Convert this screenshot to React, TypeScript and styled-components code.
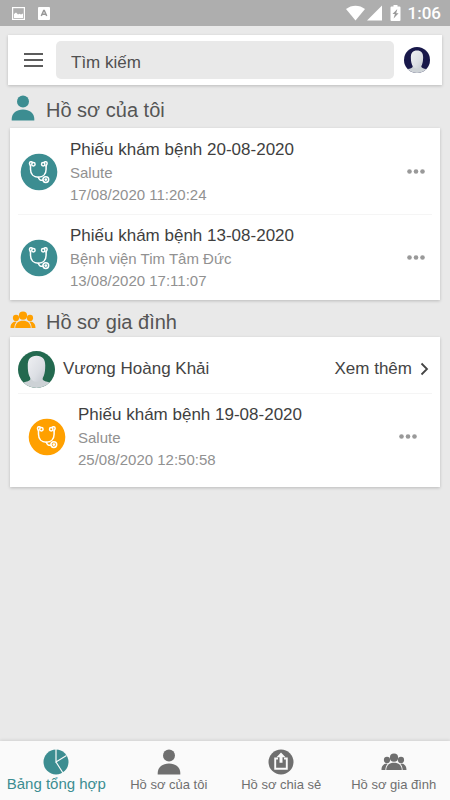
import React from "react";
import styled, { createGlobalStyle } from "styled-components";

const TEAL = "#3c8d91";
const ORANGE = "#ffa000";
const GREY = "#6f6f6f";

const GlobalStyle = createGlobalStyle`
  *, *::before, *::after { box-sizing: border-box; }
  body {
    margin: 0;
    background: #e9e9e9;
    color: #444;
    font-family: "Liberation Sans", Arial, sans-serif;
  }
  button, input { font: inherit; color: inherit; }
  h1, h2, h3, p, ul { margin: 0; padding: 0; font-weight: 400; }
  ul { list-style: none; }
  svg { display: block; flex: none; }
`;

const Screen = styled.div`
  display: flex;
  flex-direction: column;
  min-height: 100vh;
`;

const StatusBar = styled.header`
  display: flex;
  align-items: center;
  justify-content: space-between;
  height: 26px;
  padding: 0 9px 0 12px;
  background: #aeaeae;
  color: #fff;
`;

const StatusGroup = styled.div<{ $gap: number }>`
  display: flex;
  align-items: center;
  gap: ${(p) => p.$gap}px;
`;

const Clock = styled.span`
  padding-left: 4px;
  font-family: Roboto, sans-serif;
  font-size: 17px;
  font-weight: 500;
  line-height: 28px;
`;

const SearchBar = styled.div`
  display: flex;
  align-items: center;
  margin: 9px 8px 0;
  padding: 6px 12px 6px 15px;
  background: #fff;
  box-shadow: 0 1px 3px rgba(0, 0, 0, 0.2);
`;

const IconButton = styled.button`
  display: flex;
  align-items: center;
  justify-content: center;
  flex: none;
  padding: 0;
  border: 0;
  background: none;
  cursor: pointer;
`;

const SearchInput = styled.input`
  flex: 1;
  min-width: 0;
  height: 38px;
  margin: 0 10px 0 12px;
  padding: 5px 15px 0;
  border: 0;
  border-radius: 5px;
  background: #e9e9e9;
  font-size: 17px;
  &::placeholder { color: #505050; opacity: 1; }
`;

const Main = styled.main`
  flex: 1;
  padding: 0 10px 16px;
`;

const SectionHead = styled.div<{ $height: number }>`
  display: flex;
  align-items: center;
  height: ${(p) => p.$height}px;
  padding-top: 3px;
  gap: 10px;
`;

const SectionIcon = styled.span`
  display: flex;
  justify-content: center;
  width: 26px;
`;

const SectionTitle = styled.h2`
  padding-top: 4px;
  color: #555;
  font-size: 20px;
  line-height: 24px;
`;

const Card = styled.section`
  padding: 0 8px;
  background: #fff;
  box-shadow: 0 1px 3px rgba(0, 0, 0, 0.2);
`;

const Record = styled.li<{ $nested?: boolean }>`
  display: flex;
  align-items: center;
  gap: 12px;
  padding: ${(p) => (p.$nested ? "8px 14px 16px 10px" : "9px 6px 8px 2px")};
  & + & {
    padding-top: 8px;
    border-top: 1px solid #f5f5f5;
  }
`;

const RecordText = styled.div`
  flex: 1;
  min-width: 0;
`;

const RecordTitle = styled.h3`
  color: #3f3f3f;
  font-size: 17px;
  line-height: 25px;
`;

const RecordMeta = styled.p`
  color: #919191;
  font-size: 15px;
  line-height: 22px;
`;

const Person = styled.div`
  display: flex;
  align-items: center;
  gap: 8px;
  height: 57px;
  padding-top: 8px;
  border-bottom: 1px solid #f5f5f5;
`;

const PersonName = styled.h3`
  flex: 1;
  font-size: 17px;
  line-height: 24px;
`;

const MoreLink = styled.a`
  display: flex;
  align-items: center;
  gap: 8px;
  padding-right: 3px;
  color: #444;
  font-size: 17px;
  line-height: 24px;
  text-decoration: none;
`;

const TabBar = styled.nav`
  position: sticky;
  bottom: 0;
  display: grid;
  grid-template-columns: repeat(4, 1fr);
  height: 59px;
  background: #fafafa;
  box-shadow: 0 -1px 3px rgba(0, 0, 0, 0.1);
`;

const Tab = styled.a<{ $active?: boolean }>`
  display: flex;
  flex-direction: column;
  align-items: center;
  padding-top: 8px;
  color: ${(p) => (p.$active ? TEAL : GREY)};
  font-size: ${(p) => (p.$active ? 15 : 13)}px;
  line-height: ${(p) => (p.$active ? 18 : 20)}px;
  text-decoration: none;
  white-space: nowrap;
`;

const TabIcon = styled.span`
  display: flex;
  align-items: center;
  height: 26px;
`;

const PersonIcon = ({ color }: { color: string }) => (
  <svg width="24" height="26" viewBox="0 0 24 26" fill={color} aria-hidden="true">
    <circle cx="12" cy="6.500" r="6" />
    <path d="M.7 25.500V24C.7 18 5.600 14.400 12 14.400S23.300 18 23.300 24v1.500z" />
  </svg>
);

const FamilyIcon = ({ color }: { color: string }) => (
  <svg width="26" height="18" viewBox="0 0 26 18" fill={color} aria-hidden="true">
    <circle cx="13" cy="4.700" r="4.100" />
    <circle cx="6" cy="6.900" r="3.100" />
    <circle cx="20" cy="6.900" r="3.100" />
    <path d="M5.200 17c0-4.800 3.300-7.300 7.800-7.300s7.800 2.500 7.800 7.300z" />
    <path d="M.5 17c0-3.700 1.900-6.200 5.100-6.400l1.200.2C5.200 12.500 4.400 14.500 4.400 17zM25.500 17c0-3.700-1.900-6.200-5.100-6.400l-1.200.2c1.600 1.700 2.400 3.700 2.400 6.200z" />
  </svg>
);

const Stethoscope = ({ color }: { color: string }) => (
  <svg width="38" height="38" viewBox="0 0 38 38" fill="none" aria-hidden="true">
    <circle cx="19" cy="19" r="18.300" fill={color} />
    <g stroke="#fff" strokeWidth="1.500" strokeLinecap="round" strokeLinejoin="round">
      <circle cx="13.400" cy="11.200" r="1.700" />
      <circle cx="23.200" cy="11.200" r="1.700" />
      <path d="M12.600 9.600C11.800 8.100 9.300 8.500 9.500 10.500c.1 1 .8 1.400 1 2.400" />
      <path d="M24 9.600c.8-1.500 3.300-1.100 3.100.9-.1 1-.8 1.400-1 2.400" />
      <path d="M10.500 12.600v3.700c0 4.800 3.100 7.900 7.800 7.900s7.800-3.100 7.800-7.900v-3.700" />
      <path d="M18.300 24.200c.5 2.400 2.500 3.600 4.600 2.900" />
      <circle cx="25.800" cy="26.600" r="2.900" />
      <circle cx="25.800" cy="26.600" r=".7" />
    </g>
  </svg>
);

const Avatar = ({ id, size, color }: { id: string; size: number; color: string }) => (
  <svg width={size} height={size} viewBox="0 0 36 36" role="img" aria-label="Ảnh đại diện">
    <defs>
      <clipPath id={`${id}-clip`}>
        <circle cx="18" cy="18" r="18" />
      </clipPath>
      <linearGradient id={`${id}-face`} x1="0" y1="0" x2="1" y2="1">
        <stop offset="0" stopColor="#eff0f3" />
        <stop offset=".6" stopColor="#dcdfe4" />
        <stop offset="1" stopColor="#c2c7ce" />
      </linearGradient>
    </defs>
    <g clipPath={`url(#${id}-clip)`}>
      <rect width="36" height="36" fill={color} />
      <path d="M3 36v-4.500c3-1.300 6.500-1.500 8.300-3 .8-.8.900-2 .9-3.500h11.600c0 1.500.1 2.700.9 3.500 1.800 1.500 5.300 1.700 8.300 3V36z" fill="#cdd2d6" />
      <path d="M18 4.700c5.800 0 8.500 3.300 8.500 9.300 0 4-.3 7.500-1.500 10.300-1.400 3.400-4 5.700-7 5.700s-5.600-2.300-7-5.700C9.800 21.500 9.500 18 9.500 14c0-6 2.700-9.300 8.500-9.300z" fill={`url(#${id}-face)`} />
    </g>
  </svg>
);

const Dots = () => (
  <svg width="20" height="24" viewBox="0 0 20 24" fill="#999" aria-hidden="true">
    <circle cx="3.500" cy="11.500" r="2.300" />
    <circle cx="10" cy="11.500" r="2.300" />
    <circle cx="16.500" cy="11.500" r="2.300" />
  </svg>
);

type RecordProps = { title: string; place: string; time: string; color: string; nested?: boolean };

const RecordRow = ({ title, place, time, color, nested }: RecordProps) => (
  <Record $nested={nested}>
    <Stethoscope color={color} />
    <RecordText>
      <RecordTitle>{title}</RecordTitle>
      <RecordMeta>{place}</RecordMeta>
      <RecordMeta>{time}</RecordMeta>
    </RecordText>
    <IconButton type="button" aria-label="Tùy chọn">
      <Dots />
    </IconButton>
  </Record>
);

export default function App() {
  return (
    <>
      <GlobalStyle />
      <Screen>
        <StatusBar>
          <StatusGroup $gap={13}>
            <svg width="13" height="13" viewBox="0 0 13 13" aria-hidden="true">
              <rect x=".6" y=".6" width="11.800" height="11.800" fill="none" stroke="#fff" strokeWidth="1.200" />
              <path d="M2 11V7l2-1.500 2 2 1.500-.8L9 7.500l2-1V11z" fill="#fff" />
            </svg>
            <svg width="12" height="13" viewBox="0 0 12 13" aria-hidden="true">
              <rect width="12" height="13" rx="1" fill="#fff" />
              <path d="M3.300 9L5.700 3.500h.6L8.700 9M4.300 7.200h3.400" fill="none" stroke="#999" strokeWidth="1.500" />
            </svg>
          </StatusGroup>
          <StatusGroup $gap={2}>
            <svg width="19" height="16" viewBox="0 0 19 16" fill="#fff" aria-hidden="true">
              <path d="M0 4C5.500-.5 13.500-.5 19 4L9.500 15.500z" />
            </svg>
            <svg width="15" height="16" viewBox="0 0 15 16" fill="#fff" aria-hidden="true">
              <path d="M15 .5V15.500H0z" />
            </svg>
            <svg width="18" height="16" viewBox="0 0 18 16" aria-hidden="true">
              <path d="M9.500 0h4v1.600h2q1 0 1 1V15q0 1-1 1h-8q-1 0-1-1V2.600q0-1 1-1h2z" fill="#fff" />
              <path d="M13.300 4l-4.800 5h2.400l-1.300 4.500 5-5.200h-2.400z" fill="#999" />
            </svg>
            <Clock>1:06</Clock>
          </StatusGroup>
        </StatusBar>

        <SearchBar>
          <IconButton type="button" aria-label="Menu">
            <svg width="21" height="16" viewBox="0 0 21 16" fill="none" stroke="#5c5c5c" strokeWidth="2" aria-hidden="true">
              <path d="M1 2h19M1 8h19M1 14h19" />
            </svg>
          </IconButton>
          <SearchInput type="text" aria-label="Tìm kiếm" placeholder="Tìm kiếm" />
          <IconButton type="button" aria-label="Tài khoản">
            <Avatar id="account" size={26} color="#18184a" />
          </IconButton>
        </SearchBar>

        <Main>
          <SectionHead $height={43}>
            <SectionIcon>
              <PersonIcon color={TEAL} />
            </SectionIcon>
            <SectionTitle>Hồ sơ của tôi</SectionTitle>
          </SectionHead>
          <Card>
            <ul>
              <RecordRow title="Phiếu khám bệnh 20-08-2020" place="Salute" time="17/08/2020 11:20:24" color={TEAL} />
              <RecordRow title="Phiếu khám bệnh 13-08-2020" place="Bệnh viện Tim Tâm Đức" time="13/08/2020 17:11:07" color={TEAL} />
            </ul>
          </Card>

          <SectionHead $height={37}>
            <SectionIcon>
              <FamilyIcon color={ORANGE} />
            </SectionIcon>
            <SectionTitle>Hồ sơ gia đình</SectionTitle>
          </SectionHead>
          <Card>
            <Person>
              <Avatar id="member" size={37} color="#23694f" />
              <PersonName>Vương Hoàng Khải</PersonName>
              <MoreLink href="#more">
                Xem thêm
                <svg width="9" height="14" viewBox="0 0 9 14" fill="none" stroke="#444" strokeWidth="1.800" aria-hidden="true">
                  <path d="M1.500 1.500L7 7l-5.500 5.500" />
                </svg>
              </MoreLink>
            </Person>
            <ul>
              <RecordRow nested title="Phiếu khám bệnh 19-08-2020" place="Salute" time="25/08/2020 12:50:58" color={ORANGE} />
            </ul>
          </Card>
        </Main>

        <TabBar>
          <Tab $active href="#dashboard" aria-current="page">
            <TabIcon>
              <svg width="26" height="26" viewBox="0 0 26 26" aria-hidden="true">
                <circle cx="13" cy="13" r="12.500" fill={TEAL} />
                <path d="M13 0v13l10.500-6.500M13 13l7 11" fill="none" stroke="#fafafa" strokeWidth="1.200" />
              </svg>
            </TabIcon>
            Bảng tổng hợp
          </Tab>
          <Tab href="#mine">
            <TabIcon>
              <PersonIcon color={GREY} />
            </TabIcon>
            Hồ sơ của tôi
          </Tab>
          <Tab href="#shared">
            <TabIcon>
              <svg width="26" height="26" viewBox="0 0 26 26" fill="none" aria-hidden="true">
                <circle cx="13" cy="13" r="12.500" fill={GREY} />
                <path d="M10 9.500H7.200v10.300h11.600V9.500H16" stroke="#fafafa" strokeWidth="1.900" />
                <path d="M13 3.500l4.500 4.800h-3v5.500h-3V8.300h-3z" fill="#fafafa" />
              </svg>
            </TabIcon>
            Hồ sơ chia sẻ
          </Tab>
          <Tab href="#family">
            <TabIcon>
              <FamilyIcon color={GREY} />
            </TabIcon>
            Hồ sơ gia đình
          </Tab>
        </TabBar>
      </Screen>
    </>
  );
}
